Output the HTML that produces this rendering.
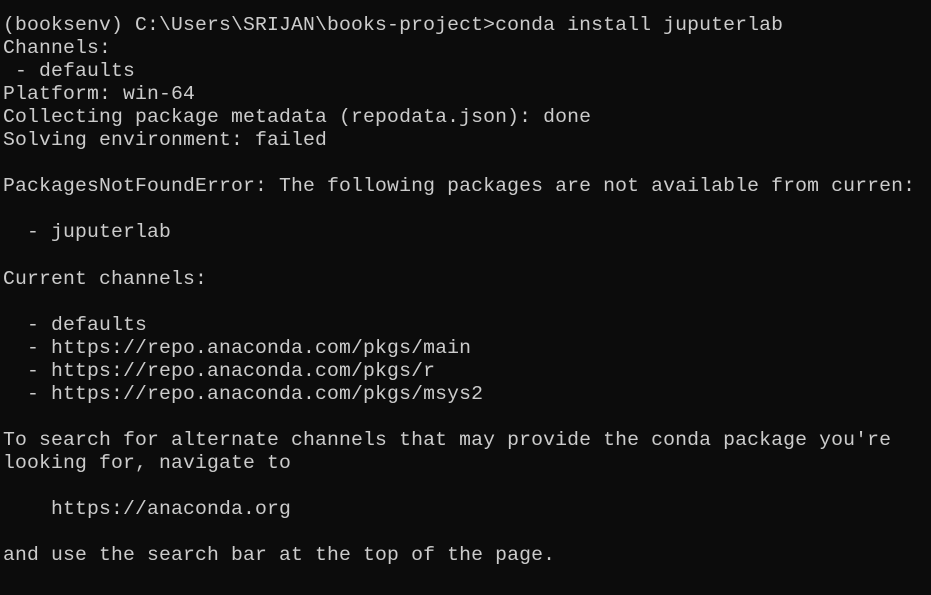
<!DOCTYPE html>
<html><head><meta charset="utf-8"><style>
html,body{margin:0;padding:0;background:#0c0c0c;width:931px;height:595px;overflow:hidden}
pre{margin:0;position:absolute;left:3px;top:14px;font-family:"Liberation Mono",monospace;font-size:19.75px;letter-spacing:0.15px;line-height:23.04px;color:#cccccc;white-space:pre}
</style></head><body><pre>(booksenv) C:\Users\SRIJAN\books-project>conda install juputerlab
Channels:
 - defaults
Platform: win-64
Collecting package metadata (repodata.json): done
Solving environment: failed

PackagesNotFoundError: The following packages are not available from curren:

  - juputerlab

Current channels:

  - defaults
  - https://repo.anaconda.com/pkgs/main
  - https://repo.anaconda.com/pkgs/r
  - https://repo.anaconda.com/pkgs/msys2

To search for alternate channels that may provide the conda package you're
looking for, navigate to

    https://anaconda.org

and use the search bar at the top of the page.
</pre></body></html>
